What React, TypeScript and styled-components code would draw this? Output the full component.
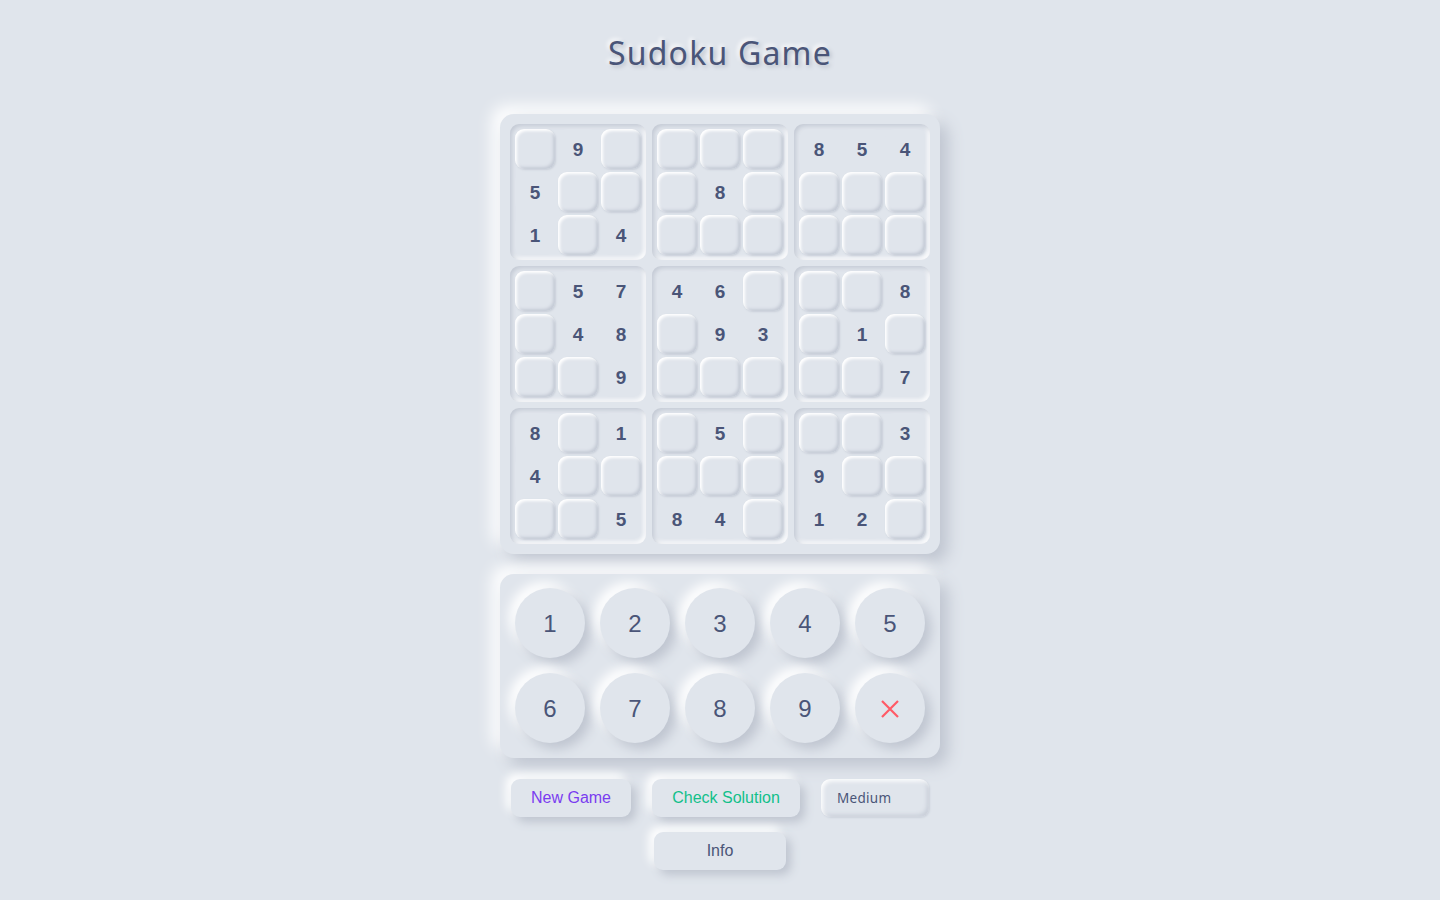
import React from "react";
import styled, { createGlobalStyle } from "styled-components";

const Global = createGlobalStyle`
  html, body { margin: 0; padding: 0; background: #e0e5ec; }
  body { font-family: "Liberation Sans", Arial, sans-serif; color: #48506e; }
`;

const Page = styled.div`
  min-height: 900px;
  display: flex;
  flex-direction: column;
  align-items: center;
  background: #e0e5ec;
`;

const Title = styled.h1`
  margin: 33px 0 0;
  height: 40px;
  font-family: "Noto Sans", "Open Sans", sans-serif;
  font-weight: 400;
  font-size: 32px;
  line-height: 40px;
  letter-spacing: 1.2px;
  color: #4a5578;
  text-shadow: 2px 2px 4px #b8bec9, -2px -2px 4px #ffffff;
`;

const Board = styled.div`
  margin-top: 41px;
  width: 440px;
  box-sizing: border-box;
  padding: 10px;
  border-radius: 14px;
  background: #e0e5ec;
  box-shadow: 8px 8px 16px #bfc5d0, -8px -8px 16px #ffffff;
  display: grid;
  grid-template-columns: repeat(3, 136px);
  gap: 6px;
`;

const Box = styled.div`
  width: 136px;
  height: 136px;
  box-sizing: border-box;
  padding: 5px;
  border-radius: 9px;
  background: #e0e5ec;
  box-shadow: inset 2px 2px 4px #c3c9d4, inset -2px -2px 4px #ffffff;
  display: grid;
  grid-template-columns: repeat(3, 40px);
  grid-auto-rows: 40px;
  gap: 3px;
`;

const Cell = styled.div<{ $empty: boolean }>`
  box-sizing: border-box;
  padding-top: 2px;
  border-radius: 9px;
  display: flex;
  align-items: center;
  justify-content: center;
  font-family: "Liberation Sans", Arial, sans-serif;
  font-weight: 700;
  font-size: 19px;
  color: #4a5578;
  background: #e0e5ec;
  box-shadow: ${(p) =>
    p.$empty
      ? "inset 2px 2px 3px #ffffff, inset -2px -2px 3px #c5cbd6, 1px 1px 2px #c9cfd9"
      : "none"};
`;

const Pad = styled.div`
  margin-top: 20px;
  width: 440px;
  box-sizing: border-box;
  padding: 14px 15px 15px;
  border-radius: 14px;
  background: #e0e5ec;
  box-shadow: 8px 8px 16px #bfc5d0, -8px -8px 16px #ffffff;
  display: grid;
  grid-template-columns: repeat(5, 70px);
  gap: 15px;
`;

const Key = styled.button<{ $danger?: boolean }>`
  width: 70px;
  height: 70px;
  border: none;
  padding: 2px 0 0;
  border-radius: 50%;
  background: #e0e5ec;
  box-shadow: 6px 6px 12px #bfc5d0, -6px -6px 12px #ffffff;
  font-family: "Liberation Sans", Arial, sans-serif;
  font-size: 24px;
  color: ${(p) => (p.$danger ? "#ff5a66" : "#4a5578")};
  display: flex;
  align-items: center;
  justify-content: center;
  cursor: pointer;
`;

const Controls = styled.div`
  margin-top: 21px;
  width: 440px;
  display: flex;
  flex-wrap: wrap;
  justify-content: center;
  column-gap: 21px;
  row-gap: 15px;
`;

const Btn = styled.button<{ $color: string; $w: number }>`
  width: ${(p) => p.$w}px;
  height: 38px;
  border: none;
  border-radius: 9px;
  background: #e0e5ec;
  box-shadow: 5px 5px 10px #bfc5d0, -5px -5px 10px #ffffff;
  font-family: "Liberation Sans", Arial, sans-serif;
  font-size: 16px;
  color: ${(p) => p.$color};
  cursor: pointer;
`;

const Select = styled.div`
  width: 108px;
  height: 38px;
  box-sizing: border-box;
  padding-left: 16px;
  border-radius: 9px;
  background: #e0e5ec;
  box-shadow: inset 2px 2px 4px #ffffff, inset -2px -2px 4px #c5cbd6, 1px 1px 2px #ccd2dc;
  display: flex;
  align-items: center;
  font-family: "Noto Sans", "Open Sans", sans-serif;
  font-size: 13.5px;
  letter-spacing: 0.3px;
  color: #4a5578;
`;

const grid: string[] = [
  "090000854",
  "500080000",
  "104000000",
  "057460008",
  "048093010",
  "009000007",
  "801050003",
  "400000900",
  "005840120",
];

function boxCells(b: number): string[] {
  const br = Math.floor(b / 3) * 3;
  const bc = (b % 3) * 3;
  const out: string[] = [];
  for (let r = 0; r < 3; r++)
    for (let c = 0; c < 3; c++) out.push(grid[br + r][bc + c]);
  return out;
}

const X = () => (
  <svg width="22" height="22" viewBox="0 0 22 22">
    <path d="M3 3 L19 19 M19 3 L3 19" stroke="#ff5a66" strokeWidth="2.2" strokeLinecap="butt" />
  </svg>
);

export default function App() {
  return (
    <Page>
      <Global />
      <Title>Sudoku Game</Title>
      <Board>
        {Array.from({ length: 9 }, (_, b) => (
          <Box key={b}>
            {boxCells(b).map((v, i) => (
              <Cell key={i} $empty={v === "0"}>
                {v === "0" ? "" : v}
              </Cell>
            ))}
          </Box>
        ))}
      </Board>
      <Pad>
        {[1, 2, 3, 4, 5, 6, 7, 8, 9].map((n) => (
          <Key key={n}>{n}</Key>
        ))}
        <Key $danger aria-label="erase">
          <X />
        </Key>
      </Pad>
      <Controls>
        <Btn $color="#7a3cf0" $w={120}>New Game</Btn>
        <Btn $color="#12c08a" $w={148}>Check Solution</Btn>
        <Select>Medium</Select>
        <Btn $color="#4a5578" $w={132}>Info</Btn>
      </Controls>
    </Page>
  );
}
